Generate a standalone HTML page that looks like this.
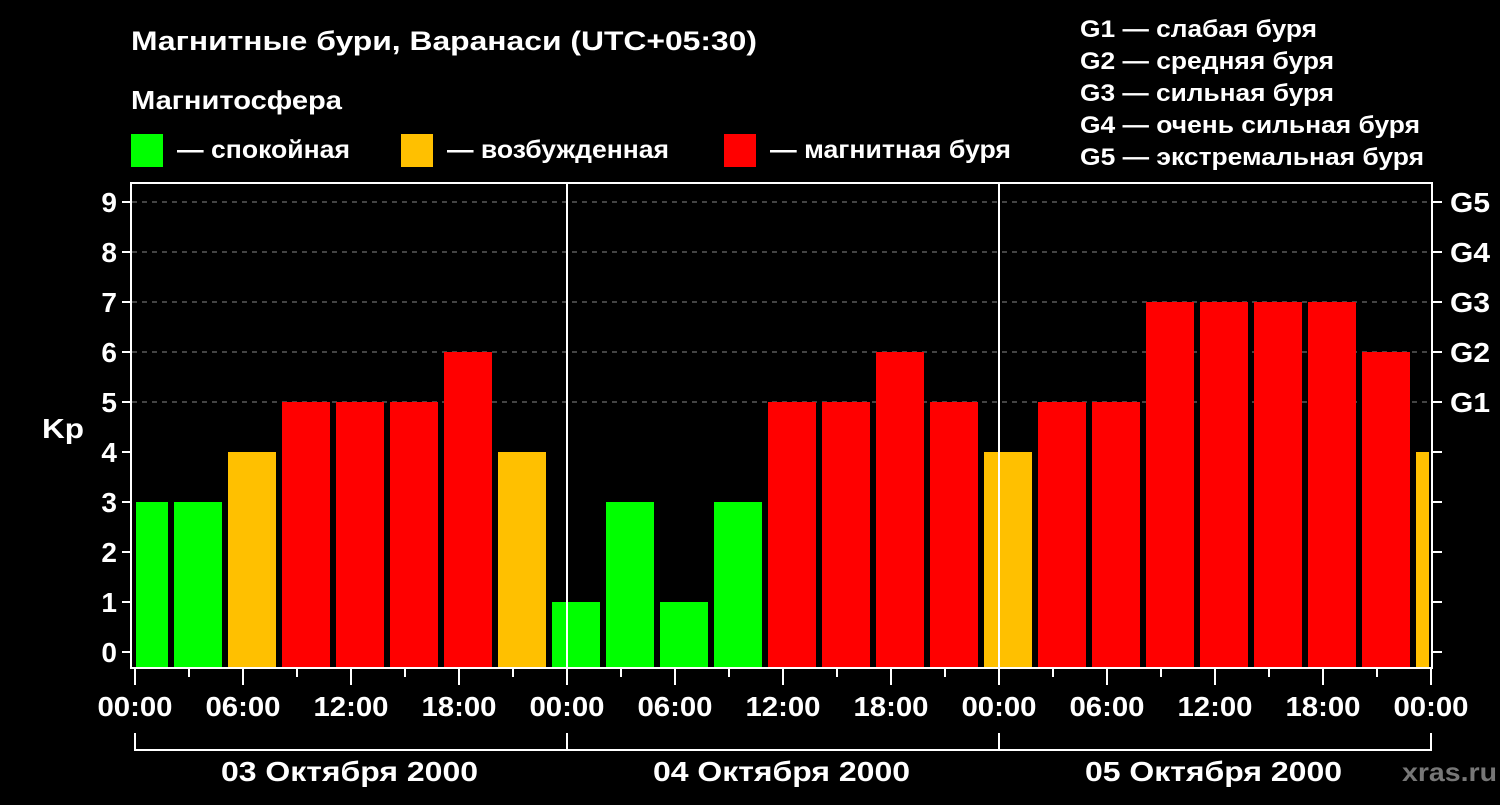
<!DOCTYPE html>
<html><head><meta charset="utf-8"><style>
body{margin:0;background:#000;width:1500px;height:800px;overflow:hidden;font-family:"Liberation Sans",sans-serif;font-weight:bold;color:#fff}
svg text{font-family:"Liberation Sans",sans-serif;font-weight:bold;fill:#fff}
</style></head><body>
<svg width="1500" height="800" xmlns="http://www.w3.org/2000/svg">
<text x="131" y="50" font-size="27" textLength="626" lengthAdjust="spacingAndGlyphs">Магнитные бури, Варанаси (UTC+05:30)</text>
<text x="131" y="109" font-size="26" textLength="211" lengthAdjust="spacingAndGlyphs">Магнитосфера</text>
<rect x="131" y="134" width="32" height="33" fill="#00ff00"/>
<text x="177" y="158" font-size="25" textLength="173" lengthAdjust="spacingAndGlyphs">— спокойная</text>
<rect x="401" y="134" width="32" height="33" fill="#ffc000"/>
<text x="447" y="158" font-size="25" textLength="222" lengthAdjust="spacingAndGlyphs">— возбужденная</text>
<rect x="724" y="134" width="32" height="33" fill="#ff0000"/>
<text x="770" y="158" font-size="25" textLength="241" lengthAdjust="spacingAndGlyphs">— магнитная буря</text>
<g font-size="24" lengthAdjust="spacingAndGlyphs">
<text x="1080" y="37" textLength="237" lengthAdjust="spacingAndGlyphs">G1 — слабая буря</text>
<text x="1080" y="69" textLength="254" lengthAdjust="spacingAndGlyphs">G2 — средняя буря</text>
<text x="1080" y="101" textLength="254" lengthAdjust="spacingAndGlyphs">G3 — сильная буря</text>
<text x="1080" y="133" textLength="340" lengthAdjust="spacingAndGlyphs">G4 — очень сильная буря</text>
<text x="1080" y="165" textLength="344" lengthAdjust="spacingAndGlyphs">G5 — экстремальная буря</text>
</g>
<g stroke="#888" stroke-width="1" stroke-dasharray="5,5">
<line x1="132" y1="202" x2="1432" y2="202"/><line x1="132" y1="252" x2="1432" y2="252"/><line x1="132" y1="302" x2="1432" y2="302"/><line x1="132" y1="352" x2="1432" y2="352"/><line x1="132" y1="402" x2="1432" y2="402"/>
</g>
<g id="bars"></g>
<g stroke="#fff" stroke-width="2" fill="none">
<rect x="131" y="183" width="1301" height="485"/>
<line x1="567" y1="183" x2="567" y2="668"/><line x1="999" y1="183" x2="999" y2="668"/>
<polyline points="135,733 135,750 1431,750 1431,733"/>
<line x1="567" y1="733" x2="567" y2="750"/><line x1="999" y1="733" x2="999" y2="750"/>
</g>
<g id="ticks" stroke="#fff" stroke-width="2"></g>
<g id="labels"></g>
<text x="42" y="438" font-size="28" textLength="42" lengthAdjust="spacingAndGlyphs">Kp</text>
<g font-size="28">
<text x="221" y="781" textLength="257" lengthAdjust="spacingAndGlyphs">03 Октября 2000</text>
<text x="653" y="781" textLength="257" lengthAdjust="spacingAndGlyphs">04 Октября 2000</text>
<text x="1085" y="781" textLength="257" lengthAdjust="spacingAndGlyphs">05 Октября 2000</text>
</g>
<text x="1402" y="781" font-size="26" textLength="95" lengthAdjust="spacingAndGlyphs" style="fill:#777">xras.ru</text>
</svg>
<script>
var ns="http://www.w3.org/2000/svg";
function el(p,t,a,txt){var e=document.createElementNS(ns,t);for(var k in a)e.setAttribute(k,a[k]);if(txt)e.textContent=txt;document.getElementById(p).appendChild(e);}
var v=[3,3,4,5,5,5,6,4,1,3,1,3,5,5,6,5,4,5,5,7,7,7,7,6,4];
v.forEach(function(k,i){var x=120+54*i,w=48;if(x<136){w=x+w-136;x=136;}if(x+w>1429)w=1429-x;
var c=k<=3?"#00ff00":(k==4?"#ffc000":"#ff0000");el("bars","rect",{x:x,y:652-50*k,width:w,height:668-(652-50*k),fill:c});});
for(var k=0;k<=9;k++){var y=652-50*k;el("ticks","line",{x1:122,y1:y,x2:131,y2:y});el("ticks","line",{x1:1432,y1:y,x2:1442,y2:y});
el("labels","text",{x:117,y:y+10,"font-size":28,"text-anchor":"end"},String(k));
if(k>=5)el("labels","text",{x:1450,y:y+10,"font-size":28,textLength:40,lengthAdjust:"spacingAndGlyphs"},"G"+(k-4));}
for(var i=0;i<=24;i++){var x=135+54*i;el("ticks","line",{x1:x,y1:668,x2:x,y2:i%2==0?685:677});
if(i%2==0){var h=(i*3)%24;el("labels","text",{x:x-37.5,y:716,"font-size":28,textLength:75,lengthAdjust:"spacingAndGlyphs"},(h<10?"0":"")+h+":00");}}
</script>
</body></html>
